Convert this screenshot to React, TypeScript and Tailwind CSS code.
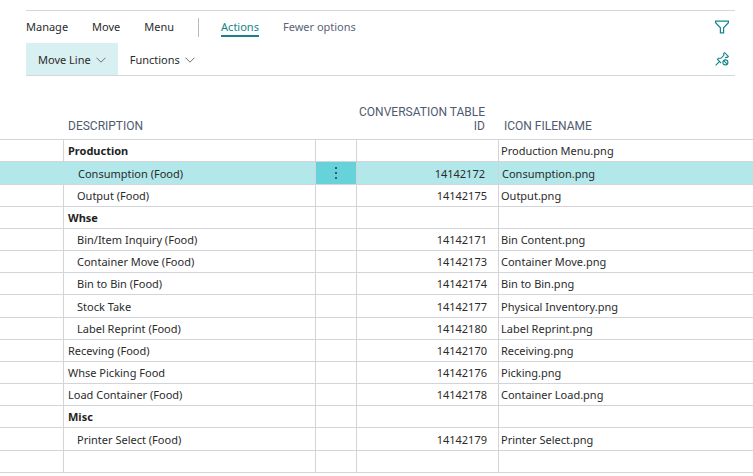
import React from "react";

type Row = {
  description: string;
  id?: string;
  file?: string;
  kind?: "group" | "child" | "selected" | "empty";
};

const rows: Row[] = [
  { description: "Production", file: "Production Menu.png", kind: "group" },
  { description: "Consumption (Food)", id: "14142172", file: "Consumption.png", kind: "selected" },
  { description: "Output (Food)", id: "14142175", file: "Output.png", kind: "child" },
  { description: "Whse", kind: "group" },
  { description: "Bin/Item Inquiry (Food)", id: "14142171", file: "Bin Content.png", kind: "child" },
  { description: "Container Move (Food)", id: "14142173", file: "Container Move.png", kind: "child" },
  { description: "Bin to Bin (Food)", id: "14142174", file: "Bin to Bin.png", kind: "child" },
  { description: "Stock Take", id: "14142177", file: "Physical Inventory.png", kind: "child" },
  { description: "Label Reprint (Food)", id: "14142180", file: "Label Reprint.png", kind: "child" },
  { description: "Receving (Food)", id: "14142170", file: "Receiving.png" },
  { description: "Whse Picking Food", id: "14142176", file: "Picking.png" },
  { description: "Load Container (Food)", id: "14142178", file: "Container Load.png" },
  { description: "Misc", kind: "group" },
  { description: "Printer Select (Food)", id: "14142179", file: "Printer Select.png", kind: "child" },
  { description: "", kind: "empty" },
];

function Chevron() {
  return (
    <svg className="h-[6px] w-[10px]" viewBox="0 0 10 6" fill="none" stroke="#6f6f6f" aria-hidden="true">
      <path d="M0.5 0.7 5 5.2 9.5 0.7" />
    </svg>
  );
}

function FilterIcon() {
  return (
    <svg className="h-[14px] w-[14px]" viewBox="0 0 14 14" fill="none" stroke="#138589" strokeWidth="1.2" aria-hidden="true">
      <path d="M0.6 1.1h12.8v1.6L8.6 7.8v5H5.4v-5L0.6 2.7z" />
    </svg>
  );
}

function UnpinIcon() {
  return (
    <svg className="h-[14px] w-[14px]" viewBox="0 0 14 14" fill="none" stroke="#138589" strokeWidth="1.1" aria-hidden="true">
      <path d="M0.6 13.4 4.4 9.6M6.2 11.2 2.4 7.2 3.5 6.2 6 6.3 8.8 3.3 8.6 1.7 9.6 0.7 13.3 4.4 12.3 5.4 10.9 5.3 10.2 6.2" />
      <circle cx="10.4" cy="10.4" r="2.5" />
      <path d="M8.7 8.7 12.1 12.1" />
    </svg>
  );
}

const cell = "border-b border-[#d2d4d9] p-0";

function TableRow({ row, tall }: { row: Row; tall: boolean }) {
  const selected = row.kind === "selected";
  const indent = selected ? "pl-[15px]" : row.kind === "child" ? "pl-[13px]" : "pl-[4px]";
  return (
    <tr className={`${tall ? "h-[23px]" : "h-[22px]"} ${selected ? "bg-[#b2e8ea]" : ""}`}>
      <td className={cell} />
      <td
        className={`${cell} ${indent} pt-px ${selected ? "" : "border-l"} ${
          row.kind === "group" ? "font-bold text-[#1f1f1f]" : ""
        }`}
      >
        {row.description}
      </td>
      <td className={`${cell} border-l text-center ${selected ? "bg-[#66d3da]" : ""}`}>
        {selected && (
          <button type="button" aria-label="More options" className="flex h-[22px] w-full items-center justify-center">
            <svg className="h-[12px] w-[2px]" viewBox="0 0 2 12" fill="#333" aria-hidden="true">
              <circle cx="1" cy="1" r="1" />
              <circle cx="1" cy="6" r="1" />
              <circle cx="1" cy="11" r="1" />
            </svg>
          </button>
        )}
      </td>
      <td className={`${cell} border-l pt-px text-right ${selected ? "pr-[13px]" : "pr-[11px]"}`}>{row.id}</td>
      <td className={`${cell} border-l pt-px ${selected ? "pl-[3px]" : "pl-[2px]"}`}>{row.file}</td>
    </tr>
  );
}

export default function App() {
  return (
    <main className="min-h-screen overflow-hidden bg-white pt-[10px] font-['Noto_Sans',sans-serif] text-[11px] leading-[16px] text-[#2b2b2b]">
      <header className="mr-[18px] ml-[26px] border-y border-[#d6d7da]">
        <nav className="flex h-[32px] items-center">
          <button type="button">Manage</button>
          <button type="button" className="ml-[24px]">Move</button>
          <button type="button" className="ml-[24px]">Menu</button>
          <span className="ml-[24px] h-[19px] w-px bg-[#b5b9c4]" />
          <button type="button" className="mt-[2px] ml-[22px] border-b-2 border-[#138589] text-[#138589]">Actions</button>
          <button type="button" className="ml-[24px] text-[#5a6478]">Fewer options</button>
          <button type="button" aria-label="Filter" className="mr-[6px] ml-auto">
            <FilterIcon />
          </button>
        </nav>
        <div className="flex h-[32px] items-center">
          <button type="button" className="flex h-full items-center gap-[5px] bg-[#d9f0f2] px-[12px] pt-[2px]">
            Move Line
            <Chevron />
          </button>
          <button type="button" className="flex h-full items-center gap-[5px] px-[12px] pt-[2px]">
            Functions
            <Chevron />
          </button>
          <button type="button" aria-label="Unpin" className="mr-[6px] ml-auto">
            <UnpinIcon />
          </button>
        </div>
      </header>

      <table className="mt-[28px] w-full table-fixed border-separate border-spacing-0">
        <colgroup>
          <col className="w-[63px]" />
          <col className="w-[252px]" />
          <col className="w-[41px]" />
          <col className="w-[142px]" />
          <col />
        </colgroup>
        <thead className="font-['Roboto',sans-serif] text-[12px] leading-[14px] text-[#4f5a70]">
          <tr className="h-[36px] align-bottom">
            <th className={cell} />
            <th className={`${cell} pb-[6px] pl-[5px] text-left font-normal`}>DESCRIPTION</th>
            <th className={cell} />
            <th className={`${cell} pr-[13px] pb-[6px] text-right font-normal`}>CONVERSATION TABLE ID</th>
            <th className={`${cell} pb-[6px] pl-[6px] text-left font-normal`}>ICON FILENAME</th>
          </tr>
        </thead>
        <tbody>
          {rows.map((row, index) => (
            <TableRow key={index} row={row} tall={index % 6 === 1} />
          ))}
        </tbody>
      </table>
    </main>
  );
}
